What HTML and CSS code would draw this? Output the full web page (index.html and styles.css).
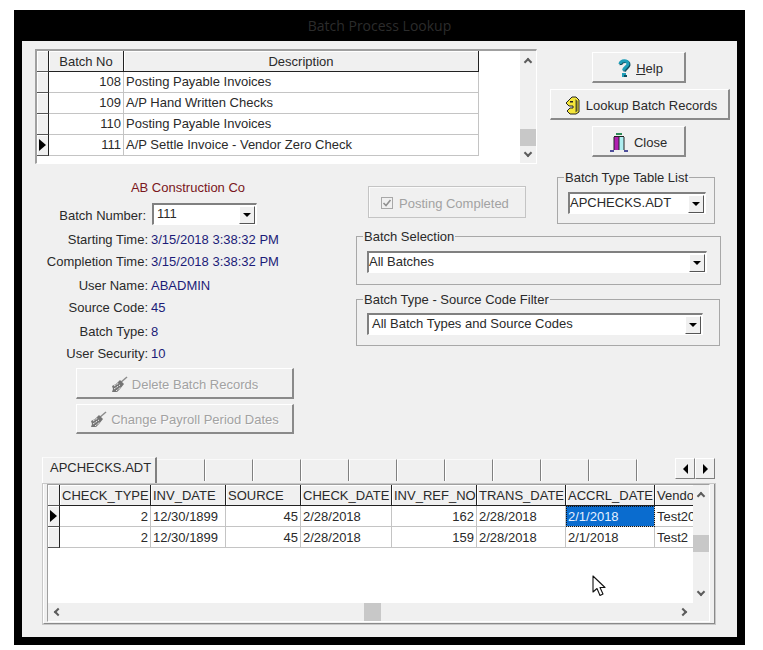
FILE: index.html
```html
<!DOCTYPE html>
<html lang="en">
<head>
<meta charset="utf-8">
<title>Batch Process Lookup</title>
<link rel="stylesheet" href="styles.css">
</head>
<body>
<div class="window">
  <div class="titlebar">Batch Process Lookup</div>
  <div class="client">
    <div class="top">
      <div class="frame top-frame">
        <div class="sheet">
          <div class="row cols-top head">
            <div class="cell ind"></div>
            <div class="cell center">Batch No</div>
            <div class="cell center">Description</div>
          </div>
          <div class="row cols-top">
            <div class="cell ind"></div>
            <div class="cell right">108</div>
            <div class="cell">Posting Payable Invoices</div>
          </div>
          <div class="row cols-top">
            <div class="cell ind"></div>
            <div class="cell right">109</div>
            <div class="cell">A/P Hand Written Checks</div>
          </div>
          <div class="row cols-top">
            <div class="cell ind"></div>
            <div class="cell right">110</div>
            <div class="cell">Posting Payable Invoices</div>
          </div>
          <div class="row cols-top">
            <div class="cell ind"><span class="pointer"></span></div>
            <div class="cell right">111</div>
            <div class="cell">A/P Settle Invoice - Vendor Zero Check</div>
          </div>
        </div>
        <div class="vbar">
          <div class="arrow"><span class="chev up"></span></div>
          <div class="track"><div class="thumb thumb-top"></div></div>
          <div class="arrow"><span class="chev down"></span></div>
        </div>
      </div>
      <div class="actions">
        <button class="btn btn-small btn-help">
          <svg class="icon" width="15" height="19" viewBox="0 0 15 19"><path d="M4 6C3.500 1.500 12.500 1 12 6C11.600 9 8 9 7.500 12.500" fill="none" stroke="#0e4a5a" stroke-width="3"/><path d="M3 5C3 1 11.500 .5 11 5C10.600 8 7 8 6.500 11.500" fill="none" stroke="#1f9db8" stroke-width="3"/><rect x="5" y="14" width="4" height="4" fill="#1f9db8"/><rect x="7" y="16" width="3" height="2" fill="#0e4a5a"/></svg>
          <span><u>H</u>elp</span>
        </button>
        <button class="btn btn-wide">
          <svg class="icon" width="15" height="19" viewBox="0 0 15 19"><path d="M7 1L11 1L14 4L14 16L11 18L5 18L2 15L5 12L8 12L8 10L4 10L1 7Z" fill="#f5e63a" stroke="#222" stroke-width="1"/><path d="M10.500 3L12.500 5L12.500 15L10.500 16.500Z" fill="#55552a"/><rect x="5" y="5" width="3" height="1.500" fill="#222"/></svg>
          <span>Lookup Batch Records</span>
        </button>
        <button class="btn btn-small">
          <svg class="icon" width="18" height="19" viewBox="0 0 18 19"><rect x="6" y="0" width="6" height="2" fill="#2e8b57"/><rect x="4" y="3" width="10" height="1.500" fill="#222"/><rect x="4" y="4" width="5" height="13" fill="#b01fb0"/><rect x="9" y="4" width="5" height="13" fill="#aeeef0"/><path d="M4 4V17M9 4V17M14 4V17" stroke="#222"/><path d="M0 18H4M14 18H18" stroke="#1a1a80" stroke-width="1.500"/></svg>
          <span>Close</span>
        </button>
      </div>
    </div>

    <div class="middle">
      <div class="info">
        <div class="company">AB Construction Co</div>
        <div class="batch-row">
          <span class="label">Batch Number:</span>
          <div class="combo combo-batch"><span class="combo-text">111</span><span class="drop"><span class="tri"></span></span></div>
        </div>
        <div class="field"><span class="label">Starting Time:</span><span class="value">3/15/2018 3:38:32 PM</span></div>
        <div class="field"><span class="label">Completion Time:</span><span class="value">3/15/2018 3:38:32 PM</span></div>
        <div class="field spaced"><span class="label">User Name:</span><span class="value">ABADMIN</span></div>
        <div class="field"><span class="label">Source Code:</span><span class="value">45</span></div>
        <div class="field spaced"><span class="label">Batch Type:</span><span class="value">8</span></div>
        <div class="field"><span class="label">User Security:</span><span class="value">10</span></div>
        <div class="danger">
          <button class="btn btn-danger delete" disabled>
            <svg class="icon" width="17" height="17" viewBox="0 0 17 17"><path d="M16 1L9 7" stroke="#8c8c8c" stroke-width="1.500"/><path d="M9 4L13 8L9 13L6 16L1 16L2 13L1 10L5 8Z" fill="#747474"/><path d="M3 10L8 7M3 13L9 9M5 15L10 11" stroke="#f0f0f0" stroke-dasharray="2 1"/></svg>
            <span>Delete Batch Records</span>
          </button>
          <button class="btn btn-danger change" disabled>
            <svg class="icon" width="17" height="17" viewBox="0 0 17 17"><path d="M16 1L9 7" stroke="#8c8c8c" stroke-width="1.500"/><path d="M9 4L13 8L9 13L6 16L1 16L2 13L1 10L5 8Z" fill="#747474"/><path d="M3 10L8 7M3 13L9 9M5 15L10 11" stroke="#f0f0f0" stroke-dasharray="2 1"/></svg>
            <span>Change Payroll Period Dates</span>
          </button>
        </div>
      </div>

      <div class="filters">
        <div class="filter-top">
          <div class="posting">
            <svg class="check" width="12" height="12" viewBox="0 0 12 12"><rect x=".5" y=".5" width="11" height="11" fill="#f0f0f0" stroke="#a8a8a8"/><path d="M2.500 6L5 8.500L9.500 3" fill="none" stroke="#909090" stroke-width="1.600"/></svg>
            <span>Posting Completed</span>
          </div>
          <div class="group group-type">
            <span class="legend">Batch Type Table List</span>
            <div class="combo combo-type"><span class="combo-text">APCHECKS.ADT</span><span class="drop"><span class="tri"></span></span></div>
          </div>
        </div>
        <div class="group group-sel">
          <span class="legend">Batch Selection</span>
          <div class="combo combo-sel"><span class="combo-text">All Batches</span><span class="drop"><span class="tri"></span></span></div>
        </div>
        <div class="group group-filter">
          <span class="legend">Batch Type - Source Code Filter</span>
          <div class="combo combo-filter"><span class="combo-text indent">All Batch Types and Source Codes</span><span class="drop"><span class="tri"></span></span></div>
        </div>
      </div>
    </div>

    <div class="pages">
      <div class="tabs">
        <div class="tab active">APCHECKS.ADT</div>
        <div class="tab-list">
          <div class="tab"></div><div class="tab"></div><div class="tab"></div><div class="tab"></div>
          <div class="tab"></div><div class="tab"></div><div class="tab"></div><div class="tab"></div>
          <div class="tab"></div><div class="tab"></div>
        </div>
        <div class="tab-scroll">
          <span class="tab-btn"><span class="tri-left"></span></span>
          <span class="tab-btn"><span class="tri-right"></span></span>
        </div>
      </div>
      <div class="page-body">
        <div class="frame data-frame">
          <div class="sheet data-sheet">
            <div class="row cols-data head">
              <div class="cell ind"></div>
              <div class="cell">CHECK_TYPE</div>
              <div class="cell">INV_DATE</div>
              <div class="cell">SOURCE</div>
              <div class="cell">CHECK_DATE</div>
              <div class="cell">INV_REF_NO</div>
              <div class="cell">TRANS_DATE</div>
              <div class="cell">ACCRL_DATE</div>
              <div class="cell clip">Vendo</div>
            </div>
            <div class="row cols-data">
              <div class="cell ind"><span class="pointer"></span></div>
              <div class="cell right">2</div>
              <div class="cell">12/30/1899</div>
              <div class="cell right">45</div>
              <div class="cell">2/28/2018</div>
              <div class="cell right">162</div>
              <div class="cell">2/28/2018</div>
              <div class="cell selected">2/1/2018</div>
              <div class="cell clip">Test20</div>
            </div>
            <div class="row cols-data">
              <div class="cell ind"></div>
              <div class="cell right">2</div>
              <div class="cell">12/30/1899</div>
              <div class="cell right">45</div>
              <div class="cell">2/28/2018</div>
              <div class="cell right">159</div>
              <div class="cell">2/28/2018</div>
              <div class="cell">2/1/2018</div>
              <div class="cell clip">Test2</div>
            </div>
          </div>
          <div class="vbar">
            <div class="arrow"><span class="chev up"></span></div>
            <div class="track"><div class="thumb thumb-data"></div></div>
            <div class="arrow"><span class="chev down"></span></div>
          </div>
          <div class="hbar">
            <div class="arrow-h"><span class="chev left"></span></div>
            <div class="track-h"><div class="thumb-h"></div></div>
            <div class="arrow-h"><span class="chev rightward"></span></div>
          </div>
          <div class="corner"></div>
        </div>
      </div>
    </div>

    <svg class="cursor" width="15" height="23" viewBox="0 0 15 23"><path d="M1 1L1 17L5 13.500L8 20.500L11 19L8 12.500L13 12.500Z" fill="#fff" stroke="#111" stroke-width="1.100" stroke-linejoin="round"/></svg>
  </div>
</div>
</body>
</html>
```
FILE: styles.css
```css
* { box-sizing: border-box; }
html, body { margin: 0; padding: 0; background: #fff; }
body {
  font-family: "Liberation Sans", Arial, sans-serif;
  font-size: 13px;
  letter-spacing: 0;
  color: #2a2a2a;
  padding: 10px 0 0 14px;
}
button { font: inherit; letter-spacing: inherit; color: inherit; }

.window {
  width: 731px;
  height: 635px;
  background: #000;
  padding: 0 8px 8px;
  display: flex;
  flex-direction: column;
}
.titlebar {
  height: 31px;
  line-height: 32px;
  text-align: center;
  color: #2c2c2c;
  font-family: "Open Sans", sans-serif;
  font-size: 14px;
  flex: none;
}
.client {
  position: relative;
  flex: 1;
  background: #f0f0f0;
  padding: 8px 0 0 13px;
}

/* top area */
.top { display: flex; height: 115px; }
.frame {
  background: #fff;
  border-top: 2px solid #a0a0a0;
  border-left: 2px solid #a0a0a0;
  border-right: 1px solid #fff;
  border-bottom: 1px solid #fff;
}
.top-frame { width: 502px; display: flex; }
.sheet { flex: 1; background: #fff; min-width: 0; }
.row { display: grid; height: 21px; }
.cols-top { grid-template-columns: 12px 75px 355px; }
.cols-data { grid-template-columns: 12px 91px 75px 75px 91px 85px 89px 89px 38px; }
.cell {
  height: 21px;
  line-height: 21px;
  padding: 0 2px;
  border-right: 1px solid #c4c4c4;
  border-bottom: 1px solid #c4c4c4;
  white-space: nowrap;
  overflow: hidden;
}
.cols-top:not(.head) .cell { line-height: 19px; }
.head .cell {
  background: #f0f0f0;
  border-right-color: #222;
  border-bottom-color: #222;
  box-shadow: inset 1px 1px 0 #fff;
}
.cell.ind {
  padding: 0;
  background: #f0f0f0;
  border-right: 1px solid #222;
  border-bottom: 1px solid #555;
  box-shadow: inset 1px 1px 0 #fff;
  display: flex;
  align-items: center;
  justify-content: center;
}
.center { text-align: center; }
.right { text-align: right; }
.clip { border-right: 0; }
.selected {
  background: #0a6ccf;
  color: #e6f0ff;
  outline: 1px dotted #111;
  outline-offset: -1px;
}
.pointer {
  width: 0; height: 0;
  border-left: 7px solid #000;
  border-top: 6px solid transparent;
  border-bottom: 6px solid transparent;
}

/* scrollbars */
.vbar { width: 16px; background: #f0f0f0; display: flex; flex-direction: column; }
.arrow { height: 18px; display: flex; align-items: center; justify-content: center; flex: none; }
.track { flex: 1; }
.thumb { height: 17px; background: #c8c8c8; }
.thumb-top { margin-top: 60px; }
.thumb-data { margin-top: 32px; }
.hbar { background: #f0f0f0; display: flex; }
.arrow-h { width: 16px; display: flex; align-items: center; justify-content: center; flex: none; }
.track-h { flex: 1; }
.thumb-h { width: 17px; height: 100%; background: #c8c8c8; margin-left: 300px; }
.corner { background: #f0f0f0; }
.chev {
  display: block;
  width: 6px; height: 6px;
  border-left: 2px solid #5c5c5c;
  border-top: 2px solid #5c5c5c;
}
.chev.up { transform: translateY(2px) rotate(45deg); }
.chev.down { transform: translateY(-2px) rotate(225deg); }
.chev.left { transform: translateX(2px) rotate(-45deg); }
.chev.rightward { transform: translateX(-2px) rotate(135deg); }

/* buttons */
.actions {
  width: 180px;
  margin: 3px 0 0 13px;
  display: flex;
  flex-direction: column;
  align-items: center;
  gap: 6px;
}
.btn {
  height: 31px;
  padding: 2px 0 0;
  background: #f0f0f0;
  border: 0;
  border-top: 1px solid #fff;
  border-left: 1px solid #fff;
  border-right: 2px solid #8a8a8a;
  border-bottom: 2px solid #8a8a8a;
  display: flex;
  align-items: center;
  justify-content: center;
  gap: 6px;
}
.btn-small { width: 94px; margin-right: 2px; }
.btn-help { gap: 4px; padding-left: 3px; }
.btn-wide { width: 180px; padding-left: 3px; }
.icon { flex: none; }
.btn-danger { width: 218px; color: #a2a2a2; gap: 4px; }
.btn-danger span { text-shadow: 1px 1px 0 #fbfbfb; }
.delete { margin-top: 4px; }
.change { margin-top: 5px; height: 30px; }
.danger { margin-left: 41px; display: flex; flex-direction: column; }

/* middle */
.middle { display: flex; }
.info { width: 321px; }
.company {
  width: 306px;
  margin-top: 12px;
  height: 22px;
  line-height: 24px;
  text-align: center;
  color: #7a1620;
}
.batch-row { display: flex; align-items: center; margin-top: 5px; height: 25px; }
.batch-row .label { margin-right: 2px; width: 111px; }
.batch-row .combo { align-self: flex-start; }
.field { display: flex; height: 22px; line-height: 24px; }
.spaced { margin-top: 2px; }
.label { width: 113px; text-align: right; flex: none; }
.value { margin-left: 3px; color: #1c1c78; }
.combo {
  display: flex;
  align-items: center;
  justify-content: space-between;
  background: #fff;
  height: 22px;
  border-top: 2px solid #808080;
  border-left: 2px solid #808080;
  border-right: 1px solid #fff;
  border-bottom: 1px solid #fff;
  padding-right: 1px;
}
.combo-text { margin-top: -2px; }
.indent { padding-left: 3px; }
.drop {
  width: 16px;
  height: 18px;
  background: #f0f0f0;
  border-top: 1px solid #fff;
  border-left: 1px solid #fff;
  border-right: 1px solid #555;
  border-bottom: 1px solid #555;
  display: flex;
  align-items: center;
  justify-content: center;
  flex: none;
}
.tri {
  width: 0; height: 0;
  border-top: 4px solid #000;
  border-left: 4px solid transparent;
  border-right: 4px solid transparent;
}
.combo-batch { width: 105px; margin-left: 4px; }
.combo-batch .combo-text { padding-left: 3px; }

/* filters */
.filters { width: 366px; }
.filter-top { display: flex; align-items: flex-start; }
.posting {
  width: 158px;
  height: 32px;
  margin: 22px 0 0 12px;
  border: 1px solid #c4c4c4;
  box-shadow: inset 1px 1px 0 #fbfbfb;
  display: flex;
  align-items: center;
  padding: 2px 0 0 12px;
  gap: 6px;
  color: #a2a2a2;
}
.check { flex: none; }
.group { position: relative; border: 1px solid #a8a8a8; padding-left: 10px; }
.legend {
  position: absolute;
  top: -8px;
  left: 6px;
  padding: 0 1px;
  background: #f0f0f0;
  line-height: 16px;
  white-space: nowrap;
}
.group-type { width: 158px; height: 47px; margin: 13px 0 0 31px; padding-top: 14px; }
.combo-type { width: 138px; }
.group-sel { width: 365px; height: 49px; margin-top: 12px; padding-top: 14px; }
.combo-sel { width: 340px; }
.group-filter { width: 364px; height: 47px; margin-top: 14px; padding-top: 13px; }
.combo-filter { width: 336px; }

/* page control */
.pages { margin: 23px 0 0 7px; width: 674px; }
.tabs { display: flex; height: 26px; position: relative; }
.tab {
  width: 48px;
  height: 22px;
  margin-top: 2px;
  flex: none;
  border-top: 1px solid #fafafa;
  border-right: 1px solid #808080;
  box-shadow: 1px 0 0 #fff;
}
.tab.active {
  width: 115px;
  height: 26px;
  margin-top: 0;
  padding: 3px 0 0 7px;
  line-height: 14px;
  border-left: 1px solid #fff;
  border-right: 2px solid #808080;
  box-shadow: none;
  position: relative;
  background: #f0f0f0;
  z-index: 1;
}
.tab-list { display: flex; flex: 1; overflow: hidden; min-width: 0; }
.tab-scroll { display: flex; flex: none; margin: 1px 1px 0 0; }
.tab-btn {
  width: 20px;
  height: 21px;
  background: #f0f0f0;
  border-top: 1px solid #fff;
  border-left: 1px solid #fff;
  border-right: 1px solid #808080;
  border-bottom: 1px solid #808080;
  display: flex;
  align-items: center;
  justify-content: center;
}
.tri-left, .tri-right { width: 0; height: 0; border-top: 5px solid transparent; border-bottom: 5px solid transparent; }
.tri-left { border-right: 5px solid #000; }
.tri-right { border-left: 5px solid #000; }
.page-body {
  height: 142px;
  padding: 0 4px 1px 3px;
  border-top: 1px solid #fff;
  border-left: 2px solid #fff;
  border-right: 2px solid #8a8a8a;
  border-bottom: 2px solid #8a8a8a;
  outline: 1px solid #c8c8c8;
  outline-offset: -1px;
}
.data-frame {
  height: 100%;
  border-top-width: 1px;
  border-left-width: 1px;
  display: grid;
  grid-template-columns: 1fr 16px;
  grid-template-rows: 1fr 18px;
}

.cursor { position: absolute; left: 570px; top: 534px; }
```
